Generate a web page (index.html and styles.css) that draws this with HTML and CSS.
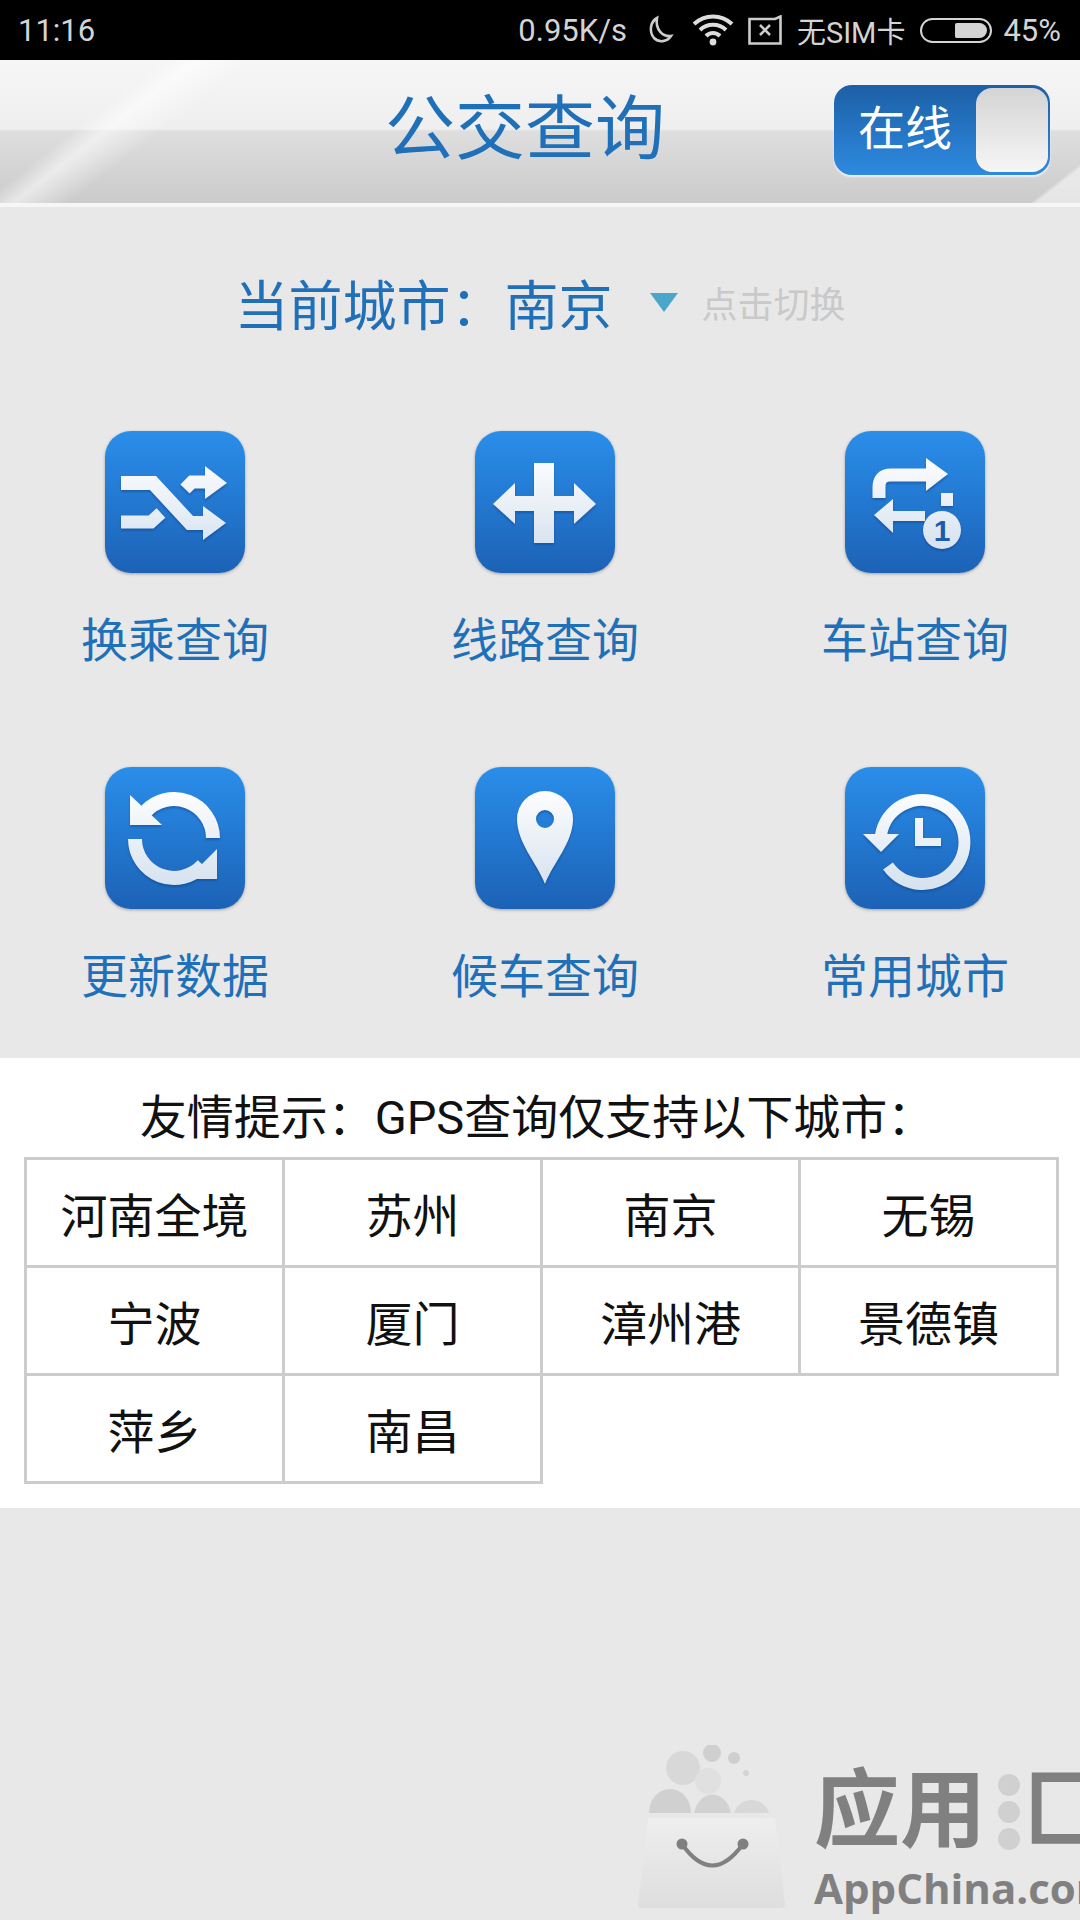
FILE: index.html
```html
<!DOCTYPE html>
<html lang="zh-CN">
<head>
  <meta charset="UTF-8" />
  <meta name="viewport" content="width=device-width, initial-scale=1.0"/>
  <title>公交查询</title>
  <link rel="stylesheet" href="styles.css">
</head>
<body>

  <!-- shared fade for the white icon glyphs -->
  <svg class="svg-defs" aria-hidden="true">
    <defs>
      <linearGradient id="glyphFade" gradientUnits="userSpaceOnUse" x1="0" y1="20" x2="0" y2="120">
        <stop offset="0" stop-color="#ffffff"/>
        <stop offset="1" stop-color="#d6e2ef"/>
      </linearGradient>
      <linearGradient id="bagFade" x1="0" y1="0" x2="0" y2="1">
        <stop offset="0" stop-color="#eeeeee"/>
        <stop offset="1" stop-color="#dedede"/>
      </linearGradient>
    </defs>
  </svg>

  <!-- Status bar -->
  <div class="status-bar">
    <span class="status-time">11:16</span>
    <div class="status-right">
      <span class="status-speed">0.95K/s</span>
      <svg class="status-moon" width="28" height="30" viewBox="0 0 28 30">
        <path d="M11 3 C4 7 3 17 8 23 C13 28 21 27 25 21 C17 22 9 15 11 3 Z" fill="none" stroke="#ccc" stroke-width="2.6"/>
      </svg>
      <svg class="status-wifi" width="44" height="34" viewBox="0 0 44 34">
        <path d="M3 11 C14 1 30 1 41 11" fill="none" stroke="#ddd" stroke-width="4"/>
        <path d="M9 17 C16 10 28 10 35 17" fill="none" stroke="#ddd" stroke-width="4"/>
        <path d="M15 23 C19 19 25 19 29 23" fill="none" stroke="#ddd" stroke-width="4"/>
        <circle cx="22" cy="29" r="3.4" fill="#ddd"/>
      </svg>
      <svg class="status-sim" width="34" height="30" viewBox="0 0 34 30">
        <path d="M1.5 4 H27 L32.5 1.5 V28.5 H1.5 Z" fill="none" stroke="#ccc" stroke-width="2.6"/>
        <path d="M12 10 L22 20 M22 10 L12 20" stroke="#ccc" stroke-width="2.6"/>
      </svg>
      <span class="status-nosim">无SIM卡</span>
      <div class="battery"><div class="battery-level"></div></div>
      <span class="status-pct">45%</span>
    </div>
  </div>

  <!-- Header -->
  <div class="header">
    <div class="header-side"></div>
    <h1 class="header-title">公交查询</h1>
    <div class="header-side header-side-right">
      <div class="toggle">
        <span class="toggle-label">在线</span>
        <div class="toggle-knob"></div>
      </div>
    </div>
  </div>

  <!-- Query panel -->
  <div class="panel">
    <div class="city-row">
      <span class="city-name">当前城市：南京</span>
      <span class="city-arrow"></span>
      <span class="city-hint">点击切换</span>
    </div>

    <div class="menu">
      <div class="menu-item">
        <div class="tile">
          <svg width="140" height="142" viewBox="0 0 140 142">
            <g class="glyph" fill="url(#glyphFade)" stroke="url(#glyphFade)">
              <path d="M16 52 H48 L85 92 H100" fill="none" stroke-width="14"/>
              <path d="M16 91 H46 L56 82" fill="none" stroke-width="13"/>
              <path d="M98 75 L121 92 L98 109 Z" stroke="none"/>
              <path d="M80 58 L87 51 H100" fill="none" stroke-width="13"/>
              <path d="M100 35 L122 52 L100 68 Z" stroke="none"/>
            </g>
          </svg>
        </div>
        <span class="menu-label">换乘查询</span>
      </div>
      <div class="menu-item">
        <div class="tile">
          <svg width="140" height="142" viewBox="0 0 140 142">
            <g class="glyph" fill="url(#glyphFade)">
              <rect x="59" y="32" width="20" height="80"/>
              <rect x="36" y="65" width="66" height="15"/>
              <path d="M18 73 L40 52 V93 Z"/>
              <path d="M121 73 L99 52 V93 Z"/>
            </g>
          </svg>
        </div>
        <span class="menu-label">线路查询</span>
      </div>
      <div class="menu-item">
        <div class="tile">
          <svg width="140" height="142" viewBox="0 0 140 142">
            <g class="glyph" fill="url(#glyphFade)" stroke="url(#glyphFade)">
              <path d="M34 67 V56 Q34 44 46 44 H82" fill="none" stroke-width="13"/>
              <path d="M81 27 L103 43 L81 60 Z" stroke="none"/>
              <rect x="96" y="62" width="12" height="13" stroke="none"/>
              <path d="M29 84 L48 68 V80 H80 V90 H48 V102 Z" stroke="none"/>
              <circle cx="97" cy="99" r="19" stroke="none"/>
            </g>
            <text class="tile-one" x="97" y="110" text-anchor="middle">1</text>
          </svg>
        </div>
        <span class="menu-label">车站查询</span>
      </div>
      <div class="menu-item">
        <div class="tile">
          <svg width="140" height="142" viewBox="0 0 140 142">
            <g class="glyph" fill="url(#glyphFade)" stroke="url(#glyphFade)">
              <path d="M108 71 A39 39 0 0 0 40 45" fill="none" stroke-width="14"/>
              <path d="M25 28 V58 H57 Z" stroke="none"/>
              <path d="M30 72 A39 39 0 0 0 98 98" fill="none" stroke-width="14"/>
              <path d="M112 82 V112 H82 Z" stroke="none"/>
            </g>
          </svg>
        </div>
        <span class="menu-label">更新数据</span>
      </div>
      <div class="menu-item">
        <div class="tile">
          <svg width="140" height="142" viewBox="0 0 140 142">
            <g class="glyph" fill="url(#glyphFade)">
              <path fill-rule="evenodd" d="M70 117 C62 96 42 76 42 52 A28 28 0 0 1 98 52 C98 76 78 96 70 117 Z M70 43 A9 9 0 1 0 70 61 A9 9 0 1 0 70 43 Z"/>
            </g>
          </svg>
        </div>
        <span class="menu-label">候车查询</span>
      </div>
      <div class="menu-item">
        <div class="tile">
          <svg width="140" height="142" viewBox="0 0 140 142">
            <g class="glyph" fill="url(#glyphFade)" stroke="url(#glyphFade)">
              <path d="M36 68 A42 42 0 1 1 43 99" fill="none" stroke-width="12"/>
              <path d="M18 67 H54 L36 85 Z" stroke="none"/>
              <path d="M74 51 V75 H96" fill="none" stroke-width="8"/>
            </g>
          </svg>
        </div>
        <span class="menu-label">常用城市</span>
      </div>
    </div>
  </div>

  <!-- GPS cities -->
  <div class="gps-box">
    <p class="gps-tip">友情提示：GPS查询仅支持以下城市：</p>
    <table class="gps-table">
      <colgroup>
        <col class="col-wide"><col class="col-wide"><col class="col-wide"><col class="col-last">
      </colgroup>
      <tr><td>河南全境</td><td>苏州</td><td>南京</td><td>无锡</td></tr>
      <tr><td>宁波</td><td>厦门</td><td>漳州港</td><td>景德镇</td></tr>
      <tr><td>萍乡</td><td>南昌</td></tr>
    </table>
  </div>

  <!-- Watermark -->
  <div class="watermark">
    <svg width="160" height="170" viewBox="0 0 160 170">
      <circle cx="53" cy="23" r="17" fill="#d8d8d8"/>
      <circle cx="82" cy="8" r="9" fill="#cfcfcf"/>
      <circle cx="104" cy="13" r="6" fill="#cfcfcf"/>
      <circle cx="116" cy="28" r="3" fill="#d4d4d4"/>
      <circle cx="78" cy="36" r="13" fill="#e0e0e0"/>
      <path d="M19 68 A21 24 0 0 1 61 68 Z" fill="#d0d0d0"/>
      <path d="M64 68 A19 24 0 0 1 101 68 Z" fill="#d2d2d2"/>
      <path d="M104 68 A18 17 0 0 1 139 68 Z" fill="#d8d8d8"/>
      <path d="M18 73 H145 L155 160 Q155 163 150 163 H12 Q8 163 8 160 Z" fill="url(#bagFade)"/>
      <path d="M52 99 Q82 142 113 99" fill="none" stroke="#808080" stroke-width="4"/>
      <circle cx="52" cy="99" r="5.5" fill="#808080"/>
      <circle cx="113" cy="99" r="5.5" fill="#808080"/>
    </svg>
    <div class="wm-text">
      <div class="wm-title">
        <span>应用</span>
        <div class="wm-dots"><i></i><i></i><i></i></div>
        <span>匚</span>
      </div>
      <div class="wm-site">AppChina.com</div>
    </div>
  </div>

</body>
</html>
```

FILE: styles.css
```css
* {
  box-sizing: border-box;
}

body {
  position: relative;
  margin: 0;
  width: 1080px;
  height: 1920px;
  overflow: hidden;
  background-color: #e8e8e8;
  font-family: Roboto, 'Noto Sans CJK SC', sans-serif;
}

.svg-defs {
  position: absolute;
  width: 0;
  height: 0;
}

/* Status bar */
.status-bar {
  display: flex;
  justify-content: space-between;
  align-items: center;
  height: 60px;
  padding: 0 19px 0 18px;
  background-color: #000;
  color: #d4d4d4;
  font-size: 31px;
}

.status-right {
  display: flex;
  align-items: center;
}

.status-moon {
  margin-left: 19px;
}

.status-wifi {
  margin-left: 17px;
}

.status-sim {
  margin-left: 13px;
}

.status-nosim {
  margin-left: 15px;
  font-size: 29px;
}

.battery {
  width: 72px;
  height: 25px;
  margin-left: 15px;
  padding: 3px;
  border: 2px solid #d4d4d4;
  border-radius: 13px;
  display: flex;
  justify-content: flex-end;
}

.battery-level {
  width: 32px;
  background-color: #d4d4d4;
  border-radius: 2px 9px 9px 2px;
}

.status-pct {
  margin-left: 11px;
}

/* Header */
.header {
  display: grid;
  grid-template-columns: 1fr auto 1fr;
  align-items: center;
  height: 147px;
  padding: 0 30px 4px 0;
  border-bottom: 4px solid #f6f6f6;
  background:
    linear-gradient(142deg, transparent 13%, rgba(255, 255, 255, 0.55) 15.5%, rgba(255, 255, 255, 0) 20%),
    linear-gradient(142deg, transparent 96%, rgba(255, 255, 255, 0.5) 96.5%),
    linear-gradient(180deg, #f6f6f6 0%, #efefef 48%, #dedede 50%, #cbcbcb 100%);
}

.header-title {
  margin: 0;
  color: #1f70b9;
  font-size: 70px;
  font-weight: 400;
  line-height: 90px;
}

.header-side-right {
  display: flex;
  justify-content: flex-end;
}

.toggle {
  display: flex;
  justify-content: space-between;
  width: 216px;
  height: 90px;
  padding: 0 2px 0 24px;
  border-radius: 18px;
  background: linear-gradient(180deg, #1c5fa6, #2e8ae0);
  box-shadow: 0 2px 2px rgba(255, 255, 255, 0.7);
}

.toggle-label {
  color: #fff;
  font-size: 47px;
  line-height: 88px;
}

.toggle-knob {
  width: 72px;
  margin: 3px 0;
  border-radius: 16px;
  background: linear-gradient(180deg, #d4d4d4, #f6f6f6);
}

/* Query panel */
.panel {
  height: 851px;
  padding-top: 60px;
}

.city-row {
  display: flex;
  justify-content: center;
  align-items: center;
  height: 70px;
}

.city-name {
  color: #1f70b9;
  font-size: 54px;
}

.city-arrow {
  width: 0;
  height: 0;
  margin: 0 23px 0 38px;
  border-left: 14px solid transparent;
  border-right: 14px solid transparent;
  border-top: 19px solid #4ba7c9;
}

.city-hint {
  color: #c9c9c9;
  font-size: 36px;
}

.menu {
  display: grid;
  grid-template-columns: repeat(3, 1fr);
  row-gap: 96px;
  margin: 94px 0 0 -10px;
  width: 1110px;
  padding: 0 0 0 0;
}

.menu-item {
  display: flex;
  flex-direction: column;
  align-items: center;
}

.tile {
  width: 140px;
  height: 142px;
  border-radius: 26px;
  background: linear-gradient(180deg, #2a8eea, #1c62b6);
  box-shadow: 0 1px 3px rgba(90, 90, 90, 0.5);
}

.tile svg {
  display: block;
}

.glyph {
  filter: drop-shadow(0 2px 1px rgba(15, 60, 130, 0.45));
}

.tile-one {
  fill: #1c5cac;
  font-family: 'Liberation Sans', sans-serif;
  font-size: 30px;
  font-weight: 700;
}

.menu-label {
  margin-top: 38px;
  color: #1f70b9;
  font-size: 47px;
  line-height: 60px;
}

/* GPS cities */
.gps-box {
  height: 450px;
  padding: 30px 0 0 24px;
  background-color: #fff;
}

.gps-tip {
  margin: 0 0 9px;
  padding-right: 30px;
  color: #111;
  font-size: 47px;
  line-height: 60px;
  text-align: center;
}

.gps-table {
  width: 1032px;
  table-layout: fixed;
  border-collapse: collapse;
}

.col-wide {
  width: 258px;
}

.col-last {
  width: 258px;
}

.gps-table td {
  height: 108px;
  padding: 0;
  border: 3px solid #cccccc;
  color: #111;
  font-size: 47px;
  text-align: center;
}

/* Watermark */
.watermark {
  position: absolute;
  left: 630px;
  top: 1745px;
  display: flex;
}

.wm-text {
  margin: 22px 0 0 24px;
}

.wm-title {
  display: flex;
  align-items: center;
  height: 90px;
  color: #808080;
  font-size: 86px;
  font-weight: 700;
  line-height: 90px;
}

.wm-dots {
  display: flex;
  flex-direction: column;
  gap: 5px;
  margin: 0 3px 0 12px;
}

.wm-dots i {
  display: block;
  width: 22px;
  height: 22px;
  border-radius: 50%;
  background-color: #d0d0d0;
}

.wm-site {
  margin-top: 6px;
  color: #808080;
  font-family: 'Open Sans', sans-serif;
  font-size: 42px;
  font-weight: 700;
  line-height: 50px;
}
```
